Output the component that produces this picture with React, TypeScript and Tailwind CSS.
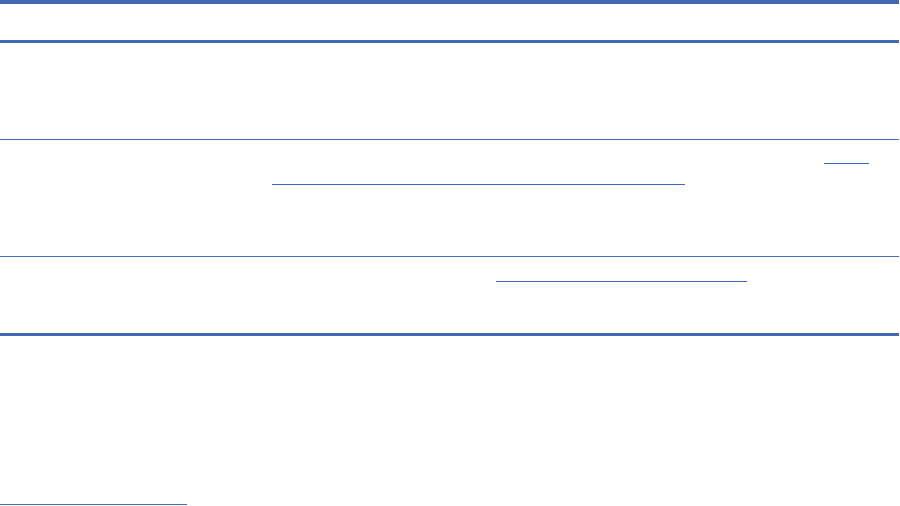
export default function App() {
  return (
    <div className="flex h-[506px] w-[900px] flex-col overflow-hidden bg-white">
      <div className="w-[899px]">
        {/* header row */}
        <div className="h-[43px] border-t-4 border-b-[3px] border-[#4068b3]" />

        {/* row 1 */}
        <div className="h-[97px] border-b border-[#4a6fb7]" />

        {/* row 2 with two link underlines */}
        <div className="flex h-[117px] flex-col border-b border-[#4a6fb7] pt-[23px]">
          <span className="ml-[824px] block h-px w-[45px] bg-[#3b67bf]" />
          <span className="ml-[272px] mt-[20px] block h-px w-[413px] bg-[#3b67bf]" />
        </div>

        {/* row 3 with one link underline */}
        <div className="flex h-[79px] flex-col border-b-[3px] border-[#4068b3] pt-[24px]">
          <span className="ml-[496px] block h-px w-[251px] bg-[#3b67bf]" />
        </div>
      </div>

      {/* footnote separator */}
      <div className="mb-[1px] mt-auto h-px w-[187px] bg-[#4a6cae]" />
    </div>
  );
}
